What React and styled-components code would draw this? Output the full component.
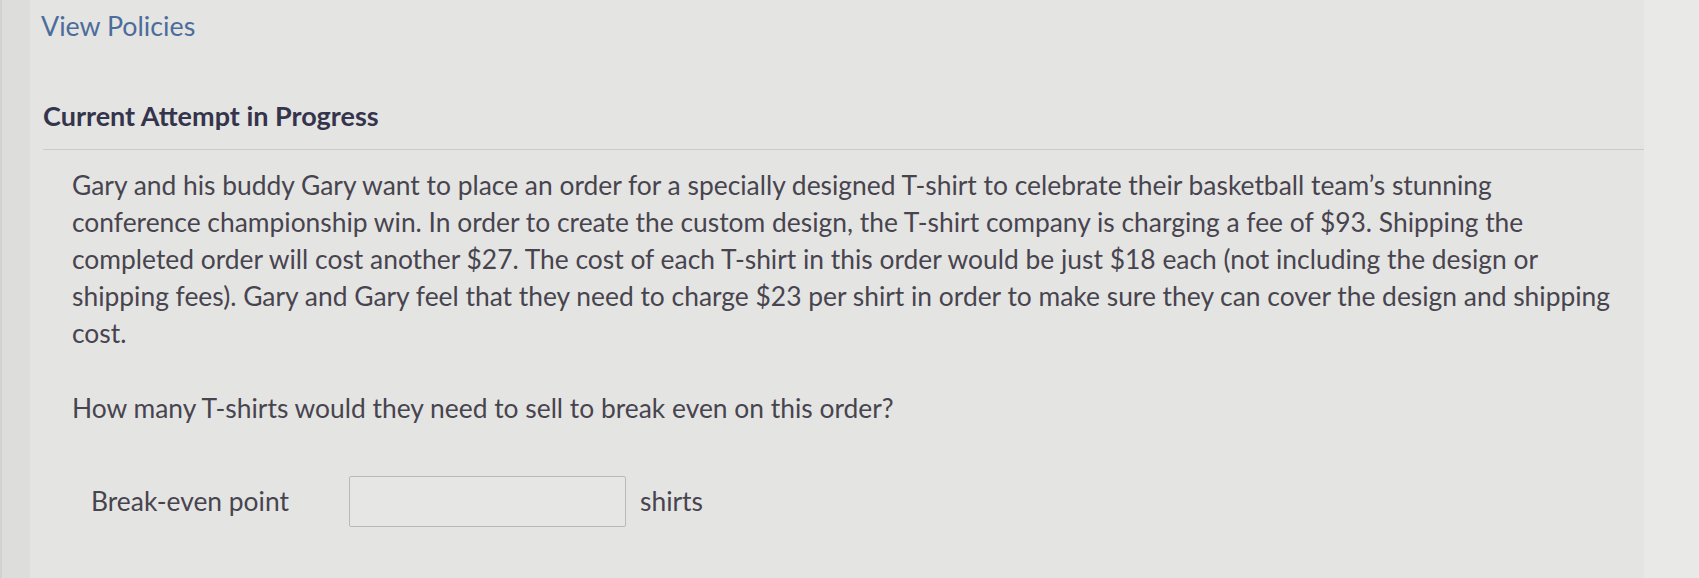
import React from "react";
import styled, { createGlobalStyle } from "styled-components";

const GlobalStyle = createGlobalStyle`
  body {
    margin: 0;
    background: #e9e9e7;
    font-family: Lato, "Open Sans", sans-serif;
  }
`;

const Page = styled.div`
  display: flex;
  min-height: 578px;
  padding-right: 55px;
  box-sizing: border-box;
`;

const Rail = styled.div`
  width: 30px;
  flex-shrink: 0;
  background: #dddddb;
  border-left: 2px solid #d2d2d0;
  box-sizing: border-box;
`;

const Panel = styled.main`
  flex: 1;
  background: #e4e4e2;
  padding-top: 10px;
`;

const PolicyLink = styled.a`
  display: inline-block;
  margin-left: 11px;
  font-size: 26.8px;
  line-height: 32px;
  color: #4c6c9c;
  text-decoration: none;
`;

const Header = styled.div`
  margin: 58px 0 0 13px;
  padding-bottom: 17px;
  border-bottom: 1px solid #cbcbc9;
`;

const Title = styled.h2`
  margin: 0;
  font-size: 27px;
  line-height: 32px;
  font-weight: 700;
  color: #34344c;
`;

const Body = styled.div`
  padding: 17px 0 0 42px;
  color: #48444f;
  font-size: 26.4px;
  line-height: 37px;
`;

const Text = styled.p`
  max-width: 1547px;
  margin: 0 0 ${(p) => p.$gap || 0}px;
`;

const AnswerRow = styled.div`
  display: flex;
  align-items: center;
  margin-top: 49px;
  padding-left: 19px;
`;

const Label = styled.label`
  width: 258px;
`;

const Input = styled.input`
  width: 277px;
  height: 51px;
  box-sizing: border-box;
  border: 1.5px solid #b9b9b7;
  border-radius: 2px;
  background: #e6e6e4;
  font: inherit;
`;

const Unit = styled.span`
  margin-left: 14px;
`;

export default function App() {
  return (
    <>
      <GlobalStyle />
      <Page>
        <Rail />
        <Panel>
          <PolicyLink href="#">View Policies</PolicyLink>
          <Header>
            <Title>Current Attempt in Progress</Title>
          </Header>
          <Body>
            <Text $gap={38}>
              Gary and his buddy Gary want to place an order for a specially
              designed T-shirt to celebrate their basketball team’s stunning
              conference championship win. In order to create the custom design,
              the T-shirt company is charging a fee of $93. Shipping the completed
              order will cost another $27. The cost of each T-shirt in this order
              would be just $18 each (not including the design or shipping fees).
              Gary and Gary feel that they need to charge $23 per shirt in order to
              make sure they can cover the design and shipping cost.
            </Text>
            <Text>How many T-shirts would they need to sell to break even on this order?</Text>
            <AnswerRow>
              <Label htmlFor="bep">Break-even point</Label>
              <Input id="bep" type="text" />
              <Unit>shirts</Unit>
            </AnswerRow>
          </Body>
        </Panel>
      </Page>
    </>
  );
}
